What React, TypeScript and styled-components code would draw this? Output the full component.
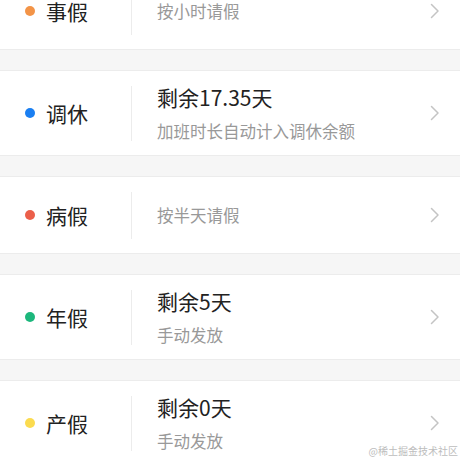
import React from 'react'
import styled, { createGlobalStyle } from 'styled-components'

type Leave = {
  name: string
  color: string
  title?: string
  note: string
}

const leaves: Leave[] = [
  { name: '事假', color: '#f39447', note: '按小时请假' },
  { name: '调休', color: '#1a7ff2', title: '剩余17.35天', note: '加班时长自动计入调休余额' },
  { name: '病假', color: '#eb5f4a', note: '按半天请假' },
  { name: '年假', color: '#1cb77c', title: '剩余5天', note: '手动发放' },
  { name: '产假', color: '#fbdb4f', title: '剩余0天', note: '手动发放' },
]

export default function App() {
  return (
    <>
      <GlobalStyle />
      <Page>
        <List>
          {leaves.map((leave) => (
            <Card key={leave.name}>
              <Label>
                <Dot color={leave.color} />
                <LabelText>{leave.name}</LabelText>
              </Label>
              <Divider />
              <Content>
                {leave.title && <Title>{leave.title}</Title>}
                <Note>{leave.note}</Note>
              </Content>
              <Chevron viewBox="0 0 10 16" width="10" height="16">
                <path d="M1.5 1.5 L8 8 L1.5 14.5" fill="none" stroke="#c4c4c4" strokeWidth="1.5" strokeLinecap="round" strokeLinejoin="round" />
              </Chevron>
            </Card>
          ))}
        </List>
        <Watermark>@稀土掘金技术社区</Watermark>
      </Page>
    </>
  )
}

const GlobalStyle = createGlobalStyle`
  html, body {
    margin: 0;
    padding: 0;
    background: #f6f6f6;
  }
  body {
    font-family: "Noto Sans CJK SC", "Noto Sans", sans-serif;
  }
`

const Page = styled.div`
  position: relative;
  width: 460px;
  height: 460px;
  overflow: hidden;
  background: #f6f6f6;
`

// the list is scrolled a little, the first card is cut at the top
const List = styled.div`
  display: flex;
  flex-direction: column;
  gap: 20px;
  margin-top: -28px;
`

const Card = styled.div`
  display: flex;
  align-items: center;
  padding: 12px 20px 12px 25px;
  background: #fff;
  border-top: 1px solid #ececec;
  border-bottom: 1px solid #ececec;
`

const Label = styled.div`
  display: flex;
  align-items: center;
  width: 106px;
  flex-shrink: 0;
`

const Dot = styled.span<{ color: string }>`
  width: 10px;
  height: 10px;
  border-radius: 50%;
  background: ${(p) => p.color};
  margin-right: 11px;
`

const LabelText = styled.span`
  font-size: 21px;
  line-height: 28px;
  color: #222;
`

const Divider = styled.div`
  align-self: stretch;
  width: 1px;
  margin: 3px 0 2px;
  background: #ececec;
`

const Content = styled.div`
  flex: 1;
  min-height: 52px;
  display: flex;
  flex-direction: column;
  justify-content: center;
  gap: 8px;
  padding-left: 25px;
`

const Title = styled.div`
  font-size: 21px;
  line-height: 28px;
  color: #222;
`

const Note = styled.div`
  font-size: 16.5px;
  line-height: 24px;
  color: #999;
`

const Chevron = styled.svg`
  flex-shrink: 0;
  display: block;
`

const Watermark = styled.div`
  position: absolute;
  right: 2px;
  bottom: 3px;
  font-size: 10px;
  line-height: 12px;
  color: #bdbdbd;
`
